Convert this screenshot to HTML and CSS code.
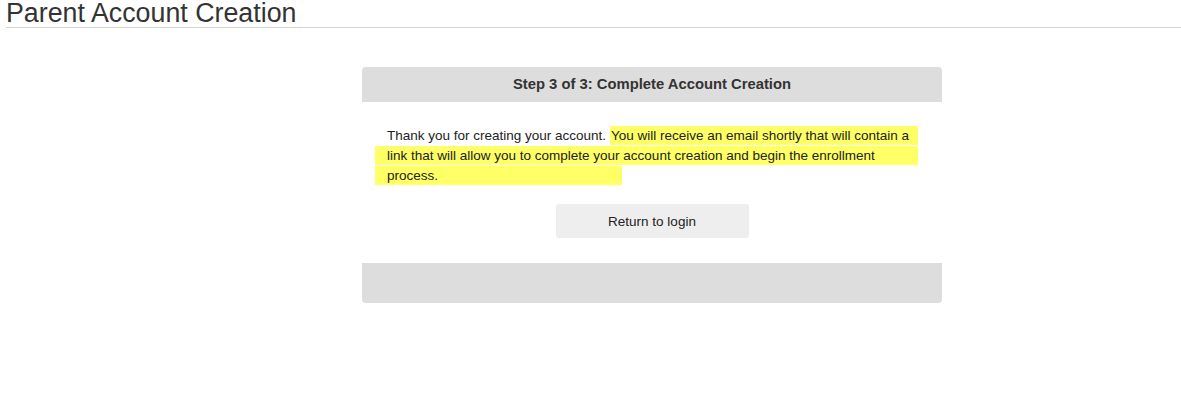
FILE: index.html
```html
<!DOCTYPE html>
<html>
<head>
<meta charset="utf-8">
<link rel="stylesheet" href="styles.css">
</head>
<body>
<h1 class="page-title">Parent Account Creation</h1>
<div class="panel">
  <div class="panel-header">Step 3 of 3: Complete Account Creation</div>
  <div class="panel-body">
    <p class="message">Thank you for creating your account. <span class="hl hl-first">You will receive an email shortly that will contain a</span><br><span class="hl hl-mid">link that will allow you to complete your account creation and begin the enrollment</span><br><span class="hl hl-last">process.</span></p>
    <div class="actions"><button class="btn">Return to login</button></div>
  </div>
  <div class="panel-footer"></div>
</div>
</body>
</html>
```
FILE: styles.css
```css
html, body {
  margin: 0;
  padding: 0;
  background: #fff;
}
body {
  font-family: "Liberation Sans", Arial, sans-serif;
  color: #333;
}
.page-title {
  margin: 0 0 0 6px;
  font-size: 26.8px;
  font-weight: normal;
  line-height: 26px;
  height: 28px;
  box-sizing: border-box;
  border-bottom: 1px solid #d4d4d4;
  color: #333;
}
.panel {
  width: 580px;
  margin: 39px 0 0 362px;
}
.panel-header {
  height: 35px;
  background: #dddddd;
  border-radius: 4px 4px 0 0;
  font-weight: bold;
  font-size: 14.8px;
  line-height: 35px;
  text-align: center;
  color: #333;
}
.panel-body {
  padding: 24px 25px 25px 25px;
}
.message {
  margin: 0;
  font-size: 13.5px;
  line-height: 20px;
  color: #222;
  white-space: nowrap;
}
.hl {
  background: #ffff66;
  padding: 2px 0 2px 0;
}
.hl-first {
  padding-left: 1px;
  padding-right: 9px;
}
.hl-mid {
  margin-left: -12px;
  padding-left: 12px;
  padding-right: 43px;
}
.hl-last {
  margin-left: -12px;
  padding-left: 12px;
  padding-right: 184px;
}
.actions {
  display: flex;
  justify-content: center;
  margin-top: 18px;
}
.btn {
  width: 193px;
  height: 34px;
  border: none;
  border-radius: 3px;
  background: #eeeeee;
  font-family: "Liberation Sans", Arial, sans-serif;
  font-size: 13.5px;
  color: #222;
}
.panel-footer {
  height: 40px;
  background: #dddddd;
  border-radius: 0 0 4px 4px;
}
```
